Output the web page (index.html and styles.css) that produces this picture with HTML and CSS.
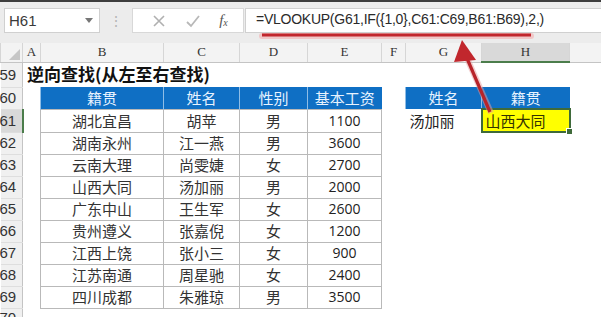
FILE: index.html
```html
<!DOCTYPE html>
<html lang="zh-CN">
<head>
    <meta charset="UTF-8">
    <title>逆向查找</title>
    <link rel="stylesheet" href="styles.css">
</head>
<body>
    <div class="toolbar">
        <div class="namebox">
            <span>H61</span>
            <span class="caret"></span>
        </div>
        <div class="grip">⋮</div>
        <div class="iconbox">
            <svg width="14" height="14" viewBox="0 0 14 14"><path d="M2 2 L12 12 M12 2 L2 12" stroke="#b0b0b0" stroke-width="1.6" fill="none"/></svg>
            <svg width="16" height="14" viewBox="0 0 16 14"><path d="M2 8 L6 12 L14 2" stroke="#b8b8b8" stroke-width="1.8" fill="none"/></svg>
            <span class="fx">f<sub>x</sub></span>
        </div>
        <div class="formula">=VLOOKUP(G61,IF({1,0},C61:C69,B61:B69),2,)</div>
    </div>

    <table class="sheet">
        <colgroup>
            <col class="c-rh"><col class="c-a"><col class="c-b"><col class="c-c"><col class="c-d">
            <col class="c-e"><col class="c-f"><col class="c-g"><col class="c-h"><col class="c-i">
        </colgroup>
        <tr class="colhead">
            <th class="corner"><span class="tri"></span></th>
            <th>A</th><th>B</th><th>C</th><th>D</th><th>E</th><th>F</th><th>G</th><th class="sel">H</th><th></th>
        </tr>
        <tr class="r59">
            <td class="rh">59</td>
            <td colspan="9"><span class="title">逆向查找(从左至右查找)</span></td>
        </tr>
        <tr>
            <td class="rh">60</td><td></td>
            <td class="hd">籍贯</td><td class="hd">姓名</td><td class="hd">性别</td><td class="hd">基本工资</td>
            <td></td>
            <td class="hd">姓名</td><td class="hd">籍贯</td><td></td>
        </tr>
        <tr>
            <td class="rh sel">61</td><td></td>
            <td class="t">湖北宜昌</td><td class="t">胡苹</td><td class="t">男</td><td class="t num">1100</td>
            <td></td>
            <td class="left">汤加丽</td>
            <td class="active"><span>山西大同</span><i class="handle"></i></td><td></td>
        </tr>
        <tr>
            <td class="rh">62</td><td></td>
            <td class="t">湖南永州</td><td class="t">江一燕</td><td class="t">男</td><td class="t num">3600</td>
            <td colspan="4"></td>
        </tr>
        <tr>
            <td class="rh">63</td><td></td>
            <td class="t">云南大理</td><td class="t">尚雯婕</td><td class="t">女</td><td class="t num">2700</td>
            <td colspan="4"></td>
        </tr>
        <tr>
            <td class="rh">64</td><td></td>
            <td class="t">山西大同</td><td class="t">汤加丽</td><td class="t">男</td><td class="t num">2000</td>
            <td colspan="4"></td>
        </tr>
        <tr>
            <td class="rh">65</td><td></td>
            <td class="t">广东中山</td><td class="t">王生军</td><td class="t">女</td><td class="t num">2600</td>
            <td colspan="4"></td>
        </tr>
        <tr>
            <td class="rh">66</td><td></td>
            <td class="t">贵州遵义</td><td class="t">张嘉倪</td><td class="t">女</td><td class="t num">1200</td>
            <td colspan="4"></td>
        </tr>
        <tr>
            <td class="rh">67</td><td></td>
            <td class="t">江西上饶</td><td class="t">张小三</td><td class="t">女</td><td class="t num">900</td>
            <td colspan="4"></td>
        </tr>
        <tr>
            <td class="rh">68</td><td></td>
            <td class="t">江苏南通</td><td class="t">周星驰</td><td class="t">女</td><td class="t num">2400</td>
            <td colspan="4"></td>
        </tr>
        <tr>
            <td class="rh">69</td><td></td>
            <td class="t">四川成都</td><td class="t">朱雅琼</td><td class="t">男</td><td class="t num">3500</td>
            <td colspan="4"></td>
        </tr>
        <tr class="r70">
            <td class="rh">70</td><td colspan="9"></td>
        </tr>
    </table>

    <!-- red marks drawn over the screenshot -->
    <svg class="marks" width="601" height="317" viewBox="0 0 601 317">
        <line x1="262" y1="36" x2="531" y2="36" stroke="#f2b8b8" stroke-width="6" stroke-linecap="round" opacity="0.7"/>
        <line x1="262" y1="35" x2="531" y2="35" stroke="#c1272d" stroke-width="3"/>
        <line x1="491" y1="113" x2="466" y2="56" stroke="#e9a0a0" stroke-width="6" opacity="0.5"/>
        <line x1="490" y1="112" x2="466" y2="56" stroke="#b8242a" stroke-width="3.2"/>
        <polygon points="462,40 476,60 454,62" fill="#c1272d"/>
    </svg>
</body>
</html>
```

FILE: styles.css
```css
body {
    margin: 0;
    width: 601px;
    height: 317px;
    overflow: hidden;
    position: relative;
    background: #ffffff;
    font-family: "Liberation Sans", "Noto Sans CJK SC", sans-serif;
    color: #222222;
}

/* formula bar */
.toolbar {
    height: 43px;
    box-sizing: border-box;
    border-top: 2px solid #3d3d3d;
    background: #ececec;
    display: flex;
    align-items: center;
    padding: 0 0 4px 4px;
}

.namebox {
    width: 96px;
    height: 25px;
    box-sizing: border-box;
    background: #ffffff;
    border: 1px solid #d0d0d0;
    display: flex;
    align-items: center;
    justify-content: space-between;
    padding: 0 6px 0 4px;
    font-size: 15px;
    color: #3a3a3a;
}

.caret {
    width: 0;
    height: 0;
    border-left: 4px solid transparent;
    border-right: 4px solid transparent;
    border-top: 5px solid #777777;
}

.grip {
    width: 32px;
    text-align: center;
    color: #b5b5b5;
    font-size: 14px;
}

.iconbox {
    width: 112px;
    height: 25px;
    box-sizing: border-box;
    background: #ffffff;
    border: 1px solid #d8d8d8;
    display: flex;
    align-items: center;
    justify-content: space-around;
    padding: 0 6px 0 10px;
}

.fx {
    font-family: "Liberation Serif", serif;
    font-style: italic;
    font-size: 15px;
    color: #555555;
}

.fx sub {
    font-size: 10px;
    vertical-align: -1px;
}

.formula {
    flex: 1;
    height: 25px;
    margin-left: 1px;
    box-sizing: border-box;
    background: #ffffff;
    border: 1px solid #d0d0d0;
    border-right: none;
    padding: 2px 0 0 10px;
    font-size: 14px;
    letter-spacing: -0.25px;
    color: #2a2a2a;
    white-space: nowrap;
}

/* worksheet */
.sheet {
    border-collapse: collapse;
    table-layout: fixed;
    width: 601px;
}

.c-rh { width: 22px; }
.c-a { width: 18px; }
.c-b { width: 123px; }
.c-c { width: 76px; }
.c-d { width: 68px; }
.c-e { width: 74px; }
.c-f { width: 24px; }
.c-g { width: 76px; }
.c-h { width: 88px; }

.sheet td, .sheet th {
    padding: 0;
    height: 21px;
    font-size: 15px;
    line-height: 18px;
    white-space: nowrap;
    overflow: visible;
}

.colhead th {
    height: 18px;
    background: #f3f3f3;
    border-left: 1px solid #d6d6d6;
    border-bottom: 1px solid #c4c4c4;
    font-family: "Liberation Serif", serif;
    font-weight: normal;
    font-size: 13px;
    color: #333333;
}

.colhead .sel {
    background: #d9d9d9;
    border-bottom: 2px solid #4b7d4b;
}

.corner {
    position: relative;
}

.tri {
    position: absolute;
    right: 2px;
    bottom: 2px;
    width: 0;
    height: 0;
    border-left: 11px solid transparent;
    border-bottom: 11px solid #c6c6c6;
}

.rh {
    background: #f0f0f0;
    border-right: 1px solid #c4c4c4;
    border-bottom: 1px solid #dedede;
    color: #333333;
    text-align: left;
    text-indent: -1px;
    font-size: 15px;
    overflow: hidden;
}

.rh.sel {
    background: #d9d9d9;
    border-right: 2px solid #4b7d4b;
}

.r59 td {
    height: 24px;
}

.r70 td {
    height: 12px;
    vertical-align: top;
}

.title {
    font-family: "Noto Sans CJK SC", sans-serif;
    font-weight: bold;
    font-size: 17px;
    color: #111111;
    padding-left: 4px;
}

.hd {
    background: #0f6fc4;
    color: #e8f3ff;
    text-align: center;
    font-family: "Noto Sans CJK SC", sans-serif;
    font-size: 14px;
    border-left: 1px solid #8fbde6;
}

.t {
    text-align: center;
    font-family: "Noto Sans CJK SC", sans-serif;
    font-size: 14px;
    color: #333333;
    border: 1px solid #b9b9b9;
}

.t.num {
    font-family: "Open Sans", sans-serif;
    font-size: 14px;
    color: #222222;
}

.left {
    text-align: left;
    padding-left: 4px !important;
    font-family: "Noto Sans CJK SC", sans-serif;
    font-size: 14px;
}

.active {
    position: relative;
    background: #ffff00;
    border: 2px solid #3f6a3a;
    font-family: "Noto Sans CJK SC", sans-serif;
    font-size: 14px;
    color: #333300;
    padding-left: 3px !important;
}

.handle {
    position: absolute;
    right: -4px;
    bottom: -4px;
    width: 5px;
    height: 5px;
    background: #3f6a3a;
    border: 1px solid #ffffff;
}

.marks {
    position: absolute;
    left: 0;
    top: 0;
    pointer-events: none;
}
```
